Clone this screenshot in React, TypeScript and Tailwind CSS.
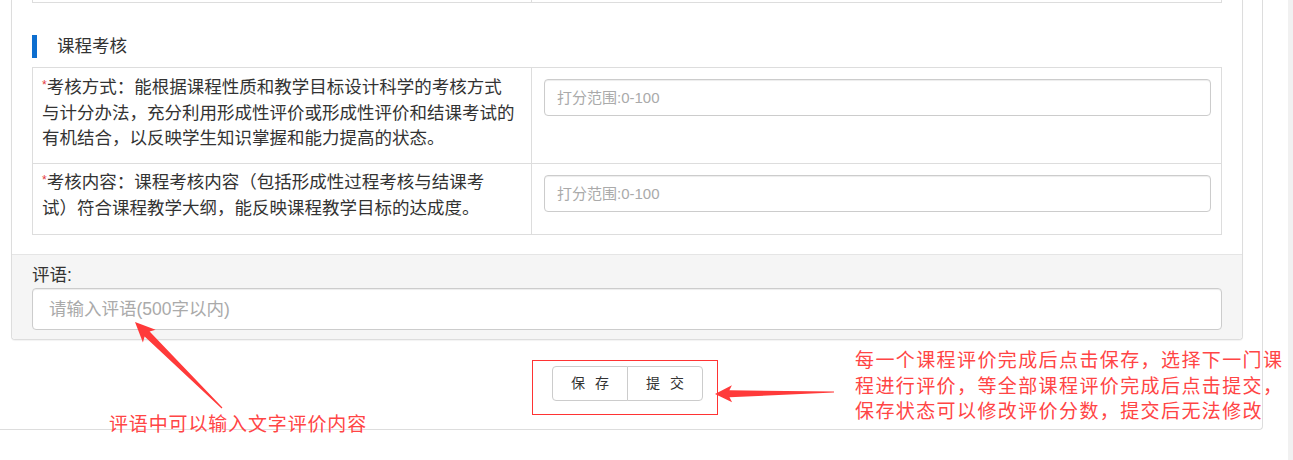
import React from 'react';

type Pt = [number, number];

// tapered annotation arrow, like the ones screenshot tools draw
const arrowPoints = (tip: Pt, tail: Pt, headLen: number, headW: number, neckW: number, tailW: number) => {
  const dx = tip[0] - tail[0];
  const dy = tip[1] - tail[1];
  const len = Math.hypot(dx, dy);
  const ux = dx / len;
  const uy = dy / len;
  const nx = -uy;
  const ny = ux;
  const base: Pt = [tip[0] - ux * headLen, tip[1] - uy * headLen];
  const neck: Pt = [tip[0] - ux * headLen * 0.85, tip[1] - uy * headLen * 0.85];
  const pts: Pt[] = [
    tip,
    [base[0] + nx * headW, base[1] + ny * headW],
    [neck[0] + nx * neckW, neck[1] + ny * neckW],
    [tail[0] + nx * tailW, tail[1] + ny * tailW],
    [tail[0] - nx * tailW, tail[1] - ny * tailW],
    [neck[0] - nx * neckW, neck[1] - ny * neckW],
    [base[0] - nx * headW, base[1] - ny * headW],
  ];
  return pts.map(p => `${p[0].toFixed(1)},${p[1].toFixed(1)}`).join(' ');
};

const criteria = [
  {
    lines: [
      '考核方式：能根据课程性质和教学目标设计科学的考核方式',
      '与计分办法，充分利用形成性评价或形成性评价和结课考试的',
      '有机结合，以反映学生知识掌握和能力提高的状态。',
    ],
    rowClass: 'h-[97px] border-t',
    textClass: 'pt-[7px]',
  },
  {
    lines: [
      '考核内容：课程考核内容（包括形成性过程考核与结课考',
      '试）符合课程教学大纲，能反映课程教学目标的达成度。',
    ],
    rowClass: 'h-[71px]',
    textClass: 'pt-[6px]',
  },
];

const ScoreRow: React.FC<{ lines: string[]; rowClass: string; textClass: string }> = ({ lines, rowClass, textClass }) => (
  <div className={`flex border-x border-b border-[#ddd] ${rowClass}`}>
    <div className={`w-[499px] shrink-0 border-r border-[#ddd] pl-[9px] text-[17.5px] leading-[25.5px] text-[#333] ${textClass}`}>
      {lines.map((line, i) => (
        <div key={i} className="whitespace-nowrap">
          {i === 0 && <span className="align-top text-[12px] leading-[20px] text-[#e4393c]">*</span>}
          {line}
        </div>
      ))}
    </div>
    <div className="flex-1 pl-[12px] pr-[10px] pt-[11px]">
      <input
        readOnly
        placeholder="打分范围:0-100"
        className="h-[37px] w-full rounded-[4px] border border-[#ccc] bg-white px-[12px] text-[15px] text-[#555] shadow-[inset_0_1px_1px_rgba(0,0,0,0.075)] outline-none placeholder:text-[#aaa]"
      />
    </div>
  </div>
);

export default function App() {
  return (
    <div
      className="relative flex h-[460px] w-[1293px] overflow-hidden bg-white"
      style={{ fontFamily: '"Liberation Sans", "Noto Sans CJK SC", sans-serif' }}
    >
      {/* page container */}
      <div className="h-[430px] w-[1263px] shrink-0 rounded-br-[4px] border-r border-b border-[#ddd] pl-[11px]">
        {/* evaluation panel */}
        <div className="w-[1232px] rounded-b-[4px] border-x border-b border-[#ddd] bg-white shadow-[0_1px_1px_rgba(0,0,0,0.05)]">
          <div className="px-[20px] pb-[19px]">
            {/* tail of the previous table */}
            <div className="flex h-[3px] border-x border-b border-[#ddd]">
              <div className="w-[499px] border-r border-[#ddd]" />
            </div>

            {/* section title */}
            <div className="mt-[32px] flex h-[23px] items-center">
              <div className="h-full w-[5px] bg-[#0d6ecf]" />
              <span className="ml-[20px] text-[17.5px] leading-[23px] text-[#333]">课程考核</span>
            </div>

            <div className="mt-[9px]">
              {criteria.map((c, i) => (
                <ScoreRow key={i} lines={c.lines} rowClass={c.rowClass} textClass={c.textClass} />
              ))}
            </div>
          </div>

          {/* comment footer */}
          <div className="rounded-b-[4px] border-t border-[#e5e5e5] bg-[#f5f5f5] px-[20px] pt-[8px] pb-[9px]">
            <div className="text-[17.5px] leading-[24px] text-[#333]">评语:</div>
            <textarea
              readOnly
              placeholder="请输入评语(500字以内)"
              className="mt-[1px] block h-[42px] w-full resize-none rounded-[4px] border border-[#ccc] bg-white px-[16px] py-[8px] text-[17.5px] leading-[24px] text-[#555] shadow-[inset_0_1px_1px_rgba(0,0,0,0.075)] outline-none placeholder:text-[#aaa]"
            />
          </div>
        </div>

        {/* actions */}
        <div className="flex w-[1232px] justify-center pt-[20px] pr-[4px]">
          <div className="flex border border-[#f33] pt-[5px] pr-[14px] pb-[13px] pl-[19px]">
            <div className="flex">
              <button className="h-[35px] w-[76px] whitespace-pre rounded-l-[4px] border border-[#ccc] bg-white pl-[3px] text-[14px] tracking-[3px] text-[#333]">
                保 存
              </button>
              <button className="-ml-px h-[35px] w-[76px] whitespace-pre rounded-r-[4px] border border-[#ccc] bg-white pl-[3px] text-[14px] tracking-[3px] text-[#333]">
                提 交
              </button>
            </div>
          </div>
        </div>
      </div>

      {/* scrollbar track */}
      <div className="ml-auto h-full w-[5px] bg-[#f1f1f1]" />

      {/* annotations */}
      <svg className="pointer-events-none absolute left-0 top-0" width="1293" height="460">
        <polygon points={arrowPoints([715, 394], [834, 392], 17, 8.5, 3.5, 0.6)} fill="#ff3a3a" />
        <polygon points={arrowPoints([135, 322], [222, 408], 20, 9, 3.5, 0.6)} fill="#ff3a3a" />
      </svg>
      <div
        className="absolute left-[855px] top-[346px] text-[19px] leading-[25.5px] tracking-[1.4px] text-[#ff4545]"
        style={{ fontFamily: '"Noto Sans CJK SC", sans-serif' }}
      >
        <div className="whitespace-nowrap">每一个课程评价完成后点击保存，选择下一门课</div>
        <div className="whitespace-nowrap">程进行评价，等全部课程评价完成后点击提交，</div>
        <div className="whitespace-nowrap">保存状态可以修改评价分数，提交后无法修改</div>
      </div>
      <div
        className="absolute left-[109px] top-[410px] whitespace-nowrap text-[19px] leading-[25px] tracking-[0.85px] text-[#ff4545]"
        style={{ fontFamily: '"Noto Sans CJK SC", sans-serif' }}
      >
        评语中可以输入文字评价内容
      </div>
    </div>
  );
}
